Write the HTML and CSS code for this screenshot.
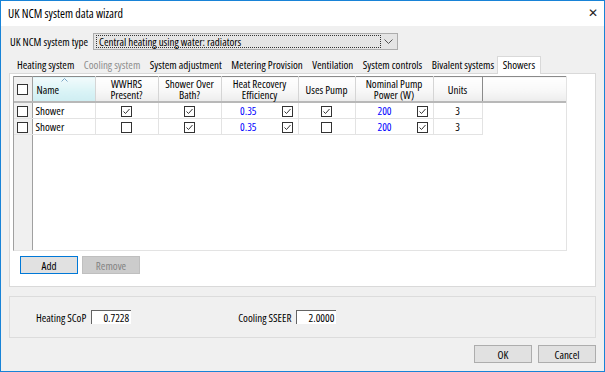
FILE: index.html
```html
<!DOCTYPE html>
<html lang="en">
<head>
  <meta charset="UTF-8">
  <title>UK NCM system data wizard</title>
  <link rel="stylesheet" href="styles.css">
</head>
<body>
  <div class="window">
    <div class="titlebar">
      <span class="title">UK NCM system data wizard</span>
      <span class="close">&#x2715;</span>
    </div>
    <div class="client">
      <div class="type-row">
        <label>UK NCM system type</label>
        <div class="select">
          <span class="select-text">Central heating using water: radiators</span>
          <span class="select-arrow"><svg width="9" height="6" viewBox="0 0 9 6"><path d="M0.5 0.5 L4.5 4.5 L8.5 0.5" fill="none" stroke="#555" stroke-width="1"/></svg></span>
        </div>
      </div>

      <div class="tabs">
        <span class="tab">Heating system</span>
        <span class="tab disabled">Cooling system</span>
        <span class="tab">System adjustment</span>
        <span class="tab">Metering Provision</span>
        <span class="tab">Ventilation</span>
        <span class="tab">System controls</span>
        <span class="tab">Bivalent systems</span>
        <span class="tab active">Showers</span>
      </div>

      <div class="tab-panel">
        <div class="grid">
          <table>
            <colgroup>
              <col style="width:18px"><col style="width:63px"><col style="width:63px"><col style="width:63px">
              <col style="width:77px"><col style="width:57px"><col style="width:78px"><col style="width:49px"><col>
            </colgroup>
            <thead>
              <tr>
                <th class="rh"><span class="cb"></span></th>
                <th class="name sorted">Name<svg class="sort-glyph" width="7" height="4" viewBox="0 0 7 4"><path d="M0.5 3.5 L3.5 0.5 L6.5 3.5" fill="none" stroke="#7aa7c7" stroke-width="1"/></svg></th>
                <th>WWHRS<br>Present?</th>
                <th>Shower Over<br>Bath?</th>
                <th>Heat Recovery<br>Efficiency</th>
                <th>Uses Pump</th>
                <th>Nominal Pump<br>Power (W)</th>
                <th class="last">Units</th>
                <th class="fill"></th>
              </tr>
            </thead>
            <tbody>
              <tr>
                <td class="rh"><span class="cb"></span></td>
                <td class="name">Shower</td>
                <td class="c"><span class="cb on"></span></td>
                <td class="c"><span class="cb on"></span></td>
                <td class="val"><span class="num">0.35</span><span class="cb on"></span></td>
                <td class="c"><span class="cb on"></span></td>
                <td class="val"><span class="num">200</span><span class="cb on"></span></td>
                <td class="c">3</td>
                <td class="empty"></td>
              </tr>
              <tr>
                <td class="rh"><span class="cb"></span></td>
                <td class="name">Shower</td>
                <td class="c"><span class="cb"></span></td>
                <td class="c"><span class="cb on"></span></td>
                <td class="val"><span class="num">0.35</span><span class="cb on"></span></td>
                <td class="c"><span class="cb"></span></td>
                <td class="val"><span class="num">200</span><span class="cb on"></span></td>
                <td class="c">3</td>
                <td class="empty"></td>
              </tr>
              <tr class="rest">
                <td class="rh"></td>
                <td colspan="8" class="empty"></td>
              </tr>
            </tbody>
          </table>
        </div>
        <div class="grid-buttons">
          <button class="btn default">Add</button>
          <button class="btn" disabled>Remove</button>
        </div>
      </div>

      <div class="results">
        <div class="result">
          <label>Heating SCoP</label>
          <span class="field">0.7228</span>
        </div>
        <div class="result cooling">
          <label>Cooling SSEER</label>
          <span class="field">2.0000</span>
        </div>
      </div>

      <div class="dialog-buttons">
        <button class="btn">OK</button>
        <button class="btn">Cancel</button>
      </div>
    </div>
  </div>
</body>
</html>
```

FILE: styles.css
```css
body { margin: 0; font-family: "Open Sans", sans-serif; font-stretch: condensed; font-size: 11px; line-height: 13px; color: #000; background: #fff; }
.window { width: 605px; height: 372px; box-sizing: border-box; border: 1px solid #1883d7; display: flex; flex-direction: column; background: #f0f0f0; }
.titlebar { height: 25px; background: #fff; display: flex; align-items: center; justify-content: space-between; padding: 0 4px 0 7px; }
.title { font-family: "Open Sans", sans-serif; font-stretch: condensed; font-size: 12px; }
.close { font-family: "DejaVu Sans", sans-serif; font-stretch: normal; font-size: 12px; color: #222; padding-right: 2px; }
.client { flex: 1; display: flex; flex-direction: column; padding: 7px 8px 0 8px; }

.type-row { display: flex; align-items: center; gap: 5px; padding-left: 1px; }
.select { width: 305px; height: 17px; box-sizing: border-box; border: 1px solid #adadad; background: #e5e5e5; display: flex; align-items: center; padding: 1px 2px; }
.select-text { flex: 1; height: 13px; line-height: 12px; border: 1px dotted #333; padding-left: 2px; box-sizing: border-box; }
.select-arrow { width: 14px; display: flex; justify-content: center; }

.tabs { display: flex; align-items: flex-end; margin-top: 7px; padding-left: 3px; height: 16px; }
.tab { padding: 0 4.5px 2px 5px; white-space: nowrap; }
.tab.disabled { color: #8d8d8d; }
.tab.active { background: #fff; border: 1px solid #d9d9d9; border-bottom: none; padding: 1px 5px 3px 5px; margin-left: -2px; margin-bottom: -1px; position: relative; z-index: 1; }

.tab-panel { background: #fff; border: 1px solid #d9d9d9; height: 214px; box-sizing: border-box; padding: 2px 28px 0 3px; }
.grid { height: 175px; border-left: 1px solid #a0a0a0; border-bottom: 1px solid #e3e3e3; border-right: 1px solid #e3e3e3; box-sizing: border-box; overflow: hidden; }
.grid table { border-collapse: collapse; table-layout: fixed; width: 100%; height: 100%; }
.grid th { height: 24px; padding: 0; font-weight: normal; text-align: center; line-height: 11px; background: linear-gradient(#fff, #f7f7f7 60%, #ececec); border-right: 1px solid #d5d5d5; border-top: 1px solid #8a8a8a; border-bottom: 2px solid #b8b8b8; }
.grid th.name { text-align: left; padding-left: 4px; position: relative; }
.grid th.sorted { background: linear-gradient(#f2fbfc, #d9f3f6 60%, #cfeef2); }
.sort-glyph { position: absolute; left: 28px; top: 1px; }
.grid th.last { border-right: 1px solid #8a8a8a; }
.grid th.fill { border-right: none; }
.grid td { height: 15px; padding: 0; border-right: 1px solid #e3e3e3; border-bottom: 1px solid #e3e3e3; vertical-align: middle; }
.grid td.rh, .grid th.rh { background: #f0f0f0; border-right: 1px solid #a0a0a0; text-align: center; }
.grid td.name { padding-left: 3px; }
.grid td.c { text-align: center; }
.grid td.val { text-align: right; padding-right: 5px; }
.grid td.val .num { color: #0000ff; margin-right: 25px; }
.grid td.empty { border: none; background: #fff; }
.grid tr.rest td { height: auto; border-bottom: none; }

.cb { display: inline-block; width: 11px; height: 11px; box-sizing: border-box; border: 1px solid #333; background: #fff; vertical-align: middle; }
.cb.on { background: #fff url("data:image/svg+xml;utf8,<svg xmlns='http://www.w3.org/2000/svg' width='9' height='9'><path d='M1.5 4.5 L3.5 6.5 L7.5 2' fill='none' stroke='%23333' stroke-width='1'/></svg>") no-repeat center; }

.grid-buttons { display: flex; gap: 4px; margin-top: 5px; padding-left: 7px; }
.btn { width: 58px; height: 18px; box-sizing: border-box; font-family: inherit; font-stretch: condensed; font-size: 11px; background: #e1e1e1; border: 1px solid #adadad; padding: 0; color: #000; }
.btn.default { border: 1px solid #0078d7; box-shadow: inset 0 0 0 1px #e1e1e1; }
.btn:disabled { background: #cccccc; border-color: #bfbfbf; color: #838383; }

.results { margin-top: 9px; height: 42px; box-sizing: border-box; border: 1px solid #dcdcdc; display: flex; align-items: center; padding-left: 26px; }
.result { display: flex; align-items: center; gap: 5px; }
.result.cooling { margin-left: 107px; }
.field { width: 40px; height: 14px; box-sizing: border-box; border-top: 1px solid #646464; border-left: 1px solid #646464; background: #fff; text-align: right; padding-right: 2px; line-height: 13px; }

.dialog-buttons { display: flex; justify-content: flex-end; gap: 6px; margin-top: 7px; }
```
